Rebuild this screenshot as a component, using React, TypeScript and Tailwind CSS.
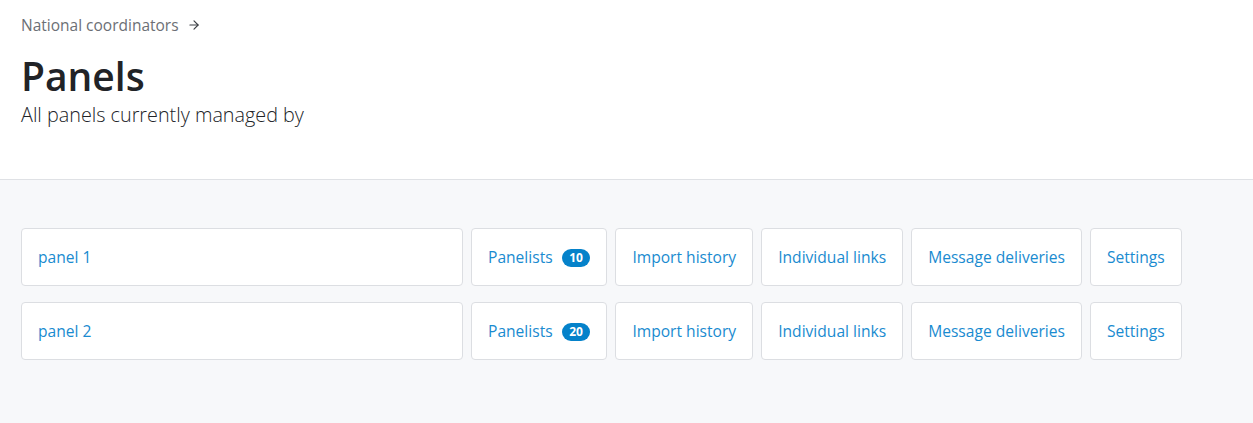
import { ArrowRight } from "lucide-react";

const panels = [
  { name: "panel 1", panelists: 10 },
  { name: "panel 2", panelists: 20 },
];

const actions = ["Import history", "Individual links", "Message deliveries", "Settings"];

const PanelRow = ({ name, panelists }: { name: string; panelists: number }) => (
  <div className="flex gap-2">
    <a className="flex h-[58px] w-[442px] items-center rounded border border-[#dcdee2] bg-white px-4 pt-[2px] text-[15.6px] text-[#1a8bd0]">
      {name}
    </a>
    <a className="flex h-[58px] items-center gap-[9px] rounded border border-[#dcdee2] bg-white px-4 pt-[2px] text-[15.6px] text-[#1a8bd0]">
      Panelists
      <span className="rounded-full bg-[#0582ca] px-[7.5px] py-[1px] text-[12px] font-bold leading-[16px] text-white">
        {panelists}
      </span>
    </a>
    {actions.map((action) => (
      <a
        key={action}
        className="flex h-[58px] items-center rounded border border-[#dcdee2] bg-white px-4 pt-[2px] text-[15.6px] text-[#1a8bd0]"
      >
        {action}
      </a>
    ))}
  </div>
);

export default function App() {
  return (
    <div className="min-h-[423px] bg-[#f7f8fa] font-['Open_Sans',sans-serif]">
      {/* Header */}
      <div className="border-b border-[#dfe1e5] bg-white px-[21px] pb-[51px] pt-[14px]">
        <div className="flex items-center gap-2 text-[15.5px] leading-[22px] text-[#6c6f75]">
          National coordinators
          <ArrowRight size={14} strokeWidth={2} className="text-[#3b3e44]" />
        </div>
        <h1 className="mt-[17px] text-[39px] font-semibold leading-[46px] text-[#212327]">Panels</h1>
        <p className="mt-[3px] text-[19.8px] font-light leading-[26px] text-[#212327]">All panels currently managed by</p>
      </div>

      {/* Panel list */}
      <div className="flex flex-col gap-4 px-[21px] pt-[48px]">
        {panels.map((panel) => (
          <PanelRow key={panel.name} {...panel} />
        ))}
      </div>
    </div>
  );
}
